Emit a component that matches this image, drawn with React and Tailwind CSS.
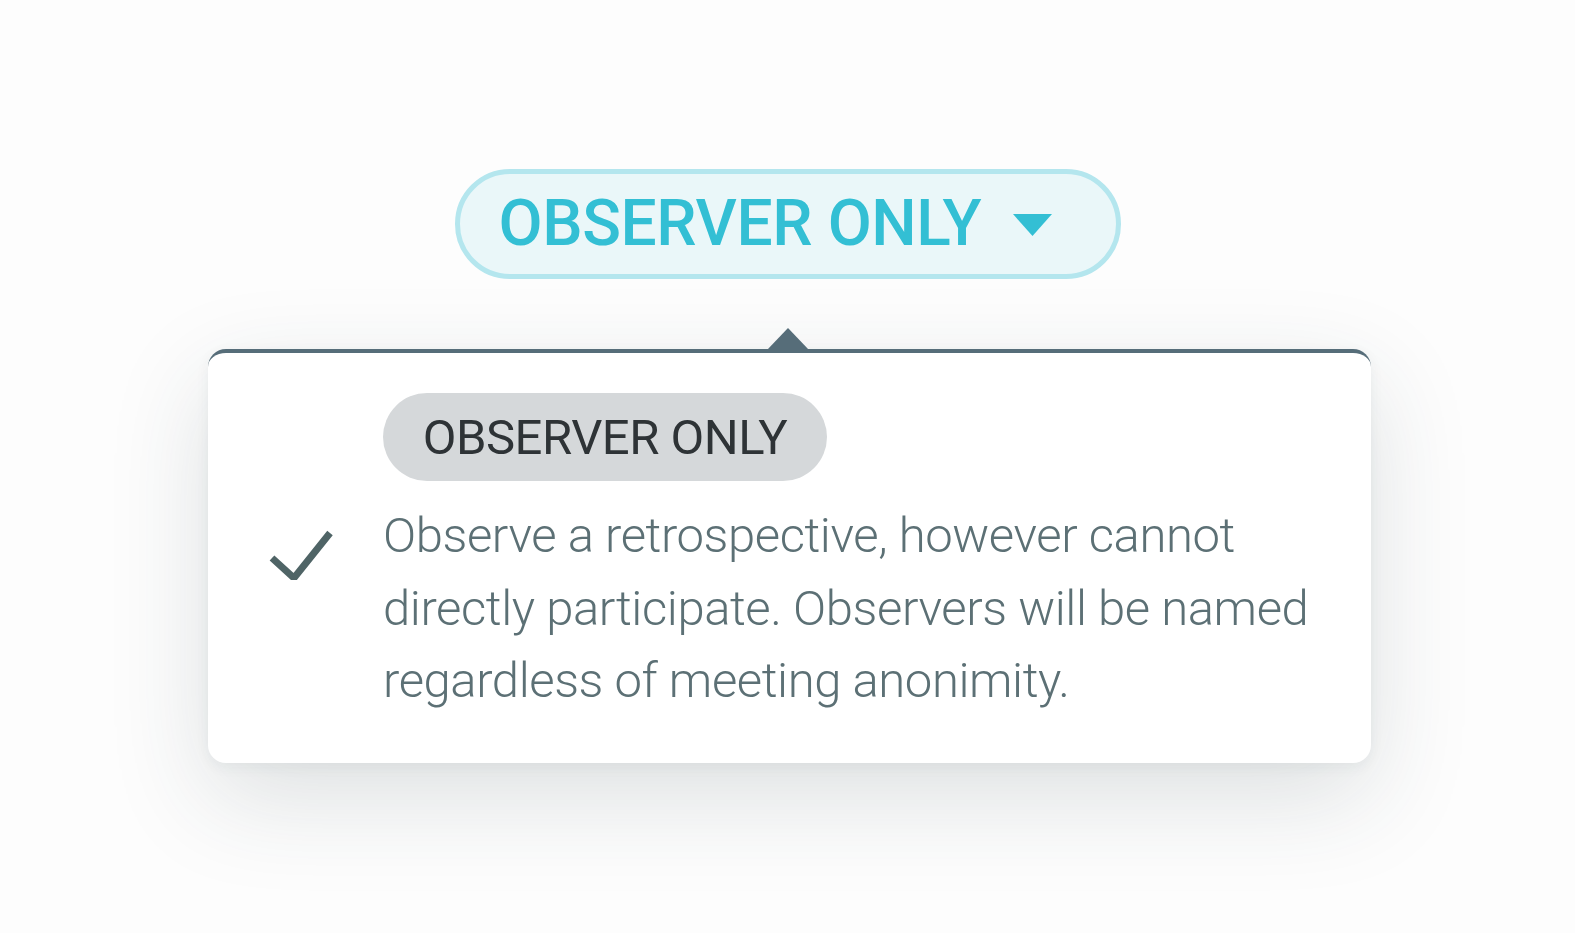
export default function App() {
  return (
    <div className="min-h-screen w-full bg-[#fdfdfd] font-['Roboto',sans-serif] flex flex-col items-center pt-[169px]">
      {/* role selector */}
      <button className="flex items-center h-[110px] w-[666px] rounded-full border-[5px] border-[#b4e6ee] bg-[#eaf7f9] pl-[39px] pr-[64px] justify-between">
        <span className="text-[64px] font-medium leading-none text-[#33bfd4] tracking-[-0.4px]">OBSERVER ONLY</span>
        <svg width="39" height="22" viewBox="0 0 39 22" className="mt-[2px]">
          <path d="M0 0h39L19.5 22z" fill="#33bfd4" />
        </svg>
      </button>

      {/* popover */}
      <div className="relative mt-[70px] ml-[4px] w-[1163px]">
        <svg width="42" height="22" viewBox="0 0 42 22" className="absolute left-[559px] top-[-21px]">
          <path d="M0 22L21 0l21 22z" fill="#566d79" />
        </svg>
        <div className="h-[414px] rounded-[18px] border-t-[4px] border-[#566d79] bg-white shadow-[0_34px_100px_rgba(40,60,70,0.15),0_4px_14px_rgba(40,60,70,0.06)] pt-[40px]">
          <div className="flex">
            <div className="w-[175px] shrink-0 flex justify-start pl-[61px] pt-[136px]">
              <svg width="64" height="51" viewBox="0 0 64 51">
                <path d="M3 29l22 20L61 4" fill="none" stroke="#4f6466" strokeWidth="7" />
              </svg>
            </div>
            <div className="flex flex-col items-start">
              <div className="h-[88px] w-[444px] rounded-full bg-[#d5d8da] flex items-center justify-center">
                <span className="text-[49px] leading-none text-[#2e3336] tracking-[-0.5px]">OBSERVER ONLY</span>
              </div>
              <p className="mt-[19px] w-[960px] text-[49px] font-light leading-[72.5px] text-[#5c7075] tracking-[-0.42px]">
                Observe a retrospective, however cannot
                <br />
                directly participate. Observers will be named
                <br />
                regardless of meeting anonimity.
              </p>
            </div>
          </div>
        </div>
      </div>
    </div>
  );
}
